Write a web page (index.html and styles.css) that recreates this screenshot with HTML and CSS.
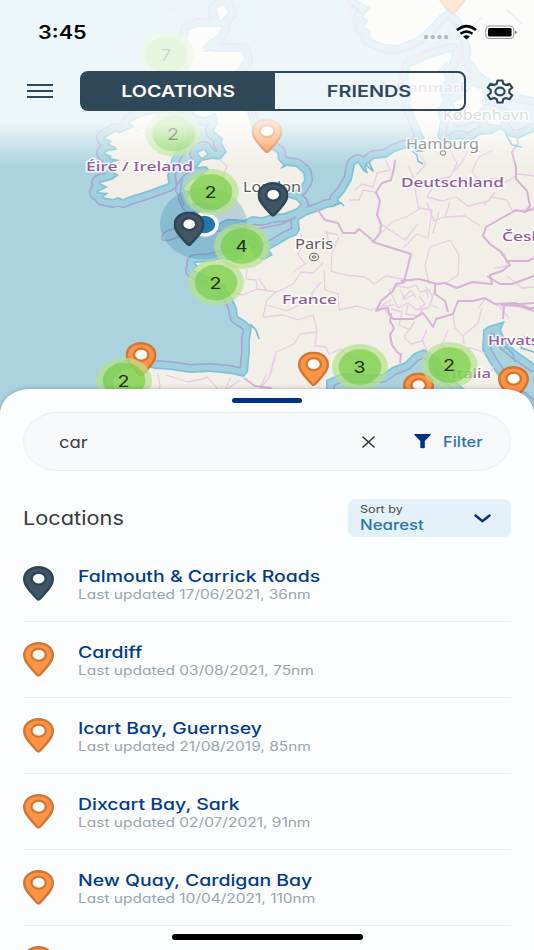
FILE: index.html
```html
<!DOCTYPE html>
<html lang="en">

<head>
    <meta charset="UTF-8">
    <meta name="viewport" content="width=device-width, initial-scale=1.0">
    <title>Locations</title>
    <link rel="stylesheet" href="styles.css">
</head>

<body>
    <div class="phone">
        <section class="top">
            <svg class="map" viewBox="0 0 534 410" width="534" height="410">
                <defs>
                    <symbol id="pin" viewBox="0 0 31 35">
                        <path d="M15.5 1.2C7.2 1.2 1.2 6.5 1.2 13.3c0 6.6 7.3 13.4 12.6 19.2q1.7 1.9 3.4 0c5.3-5.8 12.6-12.6 12.6-19.2C29.8 6.500 23.8 1.200 15.500 1.200z" stroke-width="2.400" />
                        <ellipse cx="15.700" cy="12.700" rx="7.400" ry="6.200" stroke-width="2" />
                        <ellipse cx="15.700" cy="12.700" rx="5.800" ry="4.800" fill="#fff" stroke="none" />
                    </symbol>
                    <g id="land">
                        <path d="M147 115L135 120 130 123 135 127 127 130 120 133 115 132 110 135 105 138 112 141 109 144 116 147 117 150 108 151 105 153 112 156 110 158 120 160 112 163 110 167 114 172 119 175 112 180 100 183 108 187 98 192 109 193 103 197 113 199 118 197 123 199 130 196 140 193 152 189 168 183 167 175 170 163 173 155 177 150 179 143 187 137 186 128 180 120 168 113z" />
                        <path d="M189 31L198 27 222 27 217 36 209 40 202 48 214 52 242 52 244 60 234 72 228 86 230 100 240 105 247 112 250 123 255 137 267 147 277 153 278 160 283 165 280 169 287 166 296 167 303 173 304 180 299 188 293 191 281 196 296 200 300 204 297 208 284 213 272 214 262 217 252 216 244 220 236 219 226 219 219 223 210 221 204 227 198 228 192 231 189 227 196 222 205 214 215 211 223 207 212 205 204 202 190 204 187 198 191 192 184 189 190 181 202 176 209 169 206 166 197 167 202 161 212 159 220 160 227 152 222 143 223 138 214 131 218 124 216 113 205 117 196 115 191 107 197 98 190 88 187 74 190 66 183 57 187 44z" />
                        <path d="M452 52L440 55 426 60 411 67 408 78 412 90 410 104 416 118 422 133 425 138 419 146 424 152 416 152 412 147 404 149 395 152 386 158 374 159 366 166 368 174 363 171 358 163 355 165 352 180 345 192 338 200 342 203 334 207 327 208 320 211 308 215 299 220 300 230 297 235 288 239 278 245 269 250 273 255 264 260 255 258 250 246 243 244 244 258 232 261 222 259 210 262 195 263 199 266 194 270 201 273 212 278 224 284 232 297 237 308 238 316 246 321 252 327 250 340 250 352 248 372 244 377 230 374 210 372 190 373 170 370 155 369 142 366 122 370 113 380 118 410 329 410 326 394 326 380 342 373 362 374 382 374 392 367 405 362 414 353 424 349 438 357 446 372 460 385 478 400 492 410 534 410 520 399 507 392 498 376 489 362 482 350 483 330 488 326 505 321 501 330 507 343 518 352 534 363 534 132 518 139 508 136 501 129 492 134 480 135 470 142 458 139 450 145 440 141 437 136 440 122 437 110 443 100 438 89 446 80 442 70 450 62z" />
                        <path d="M357 0L371 8 363 16 369 22 363 26 371 30 370 38 385 44 397 45 417 37 431 24 439 15 448 9 460 17 468 37 472 51 470 59 482 73 494 83 512 93 534 97 534 0z" />
                        <path d="M453 103L463 98 472 86 482 90 486 104 474 114 460 118zM490 113l14 4-5 8-12-2zM518 335l7 6 9 2v12zM217 9l7-4 4 8-8 8zM198 153l6-3 3 4-5 4z" />
                    </g>
                </defs>
                <rect width="534" height="410" fill="#abd3df" />
                <use href="#land" class="sea-border" />
                <use href="#land" class="shallow" />
                <use href="#land" class="coast" />
                <use href="#land" class="ground" />

                <g class="region">
                    <path d="M136 131l12-6 10-8 14 0M219 159l8 7-4 10 2 12-8 6M247 268l-1 11 10 1 1 9-14 6-10-2M257 289l20 3 16-8 8-12 12 1 10-10M301 233l2 12-5 9 7 10-12 8M330 245l-4-13 12 3M339 237l-7 16-1 18 14 4 20 2 9 7 12-8 16 3 10 2M324 270l1 20 13 4 1 16 18-4 14 4 13-4 10-1M267 291l-8-12M276 292l-9 8-4 17 20-2 15 5 15-5 4 15-2 16 11 1 3 7 12-5 8 7 14 4M316 332l-16 2-6 10-18 8-3 10-2 12M380 234l12-12 16-6 11-7-3-14-3-17-4-12M419 208l13 2-4 28-11-4-14 14M379 223l26 17 13-16M450 150l7 13-7 14-13 2-10 18 15 4 14-4 12 9 20-5 7-9M427 203l7 18 11-4 5-15M445 217l20-1 15 10M433 233l6-21M450 240l-20 7-5 19 4 18M450 240l9 15-1 20-12 8M355 190l7-6 11 3 4-14 13-3-4-10M349 200l10 0 4-10 11 2 6 7M374 172l-5-7M402 300l9-10 5 8M391 309l11 3-3 13 11 5 5-9M492 245l13 9 2 12-13 2M507 276l15 12 12-1M453 314l2 14 8 8 1 8M463 336l15-13 4-15M448 331l-7 15 10 4 20-2 14 5M478 309l7-10 15 8 9 11M414 322l-10 15 7 7 11-3 5-12M480 182l14-4 12 4 12-8 16 2M484 205l8-8 15 3 6 12 21-4M493 150l-14 7-7 14 7 10M468 150l-5 11-9 10M509 230l12 8 13-2M422 340l8 16M494 366l-4 7M158 374l2 12-4 14M166 375l22 7 18-4M206 376l11 12-4 14M231 377l-7 15M267 373l-7 15 15 4 13 14M240 380l-14 10M275 358l-6 20-8 9M420 155l6 9-10 11M439 144l12 7M303 303l-16 8-20-6M321 282l-9 11 1 8" />
                    <path d="M389 290l9-4 10 2 8-3 4 7 9-2 4 8-5 10-11 2-9-7-10 5-4-9zM400 290l5 9 10-5M419 296l6 8-8 6M426 286l2 12M391 300l-8 5 4 8M408 305l-2 9 12 2 7-9M434 291l-4 14 9 3" />
                </g>
                <g class="country">
                    <path d="M316 208l9 12 13 3 5 10 12 0 4-4 12 10 2 3 7-9 1-9-4-9 3-14-4-9 6-9 9-3 3-12 1-8M373 242l38 12-7 28-2 1-6 1-3 7-12 10-5 10 5-2 7-1 1 6 4 5 4 0 16 0 10-6 6 8 4 6 3-8 17-5 5-13 15 0 12-3 10 6 20-1 14 5 17 0M401 281l18-2 18 5 8-1 12 5 15-6 20 2-2-9 12-4 8-6-10-14-9-6-8-9 3-9 30-17 9 2 5-6-3-15-11-12 0-12-4-15 6-9-3-16M391 313l-1 8 4 7-4 7 2 10 6 8 3 1-1 9M507 261l21 0 6-3M501 305l18 1 15 5M534 303l-30 2-1 14M487 276l13 8 12 0 22-8M244 378l11 8 15 2 10 7 20-3 14 7 14 2M523 212l11-3M435 284v10l10 7 3 11" />
                </g>
                <g class="river">
                    <path d="M412 151l5 4 1 6 5 3M250 324l6 6 3 9M366 165l7 6-4-9M505 346l8 8 2 8M505 133l7 12 10 2M525 336l-4 12 13 4M203 51l16-1M334 205l7-2 3 3" />
                    <path d="M352 4l12 12M463 37l18-19M507 10l15 14M447 63l-9 9" />
                </g>
                <g class="faint-border">
                    <path d="M130 50q-8 6-15 1t7-9q9 0 8 8M163 14q8-8 18-3 5 5-1 8-11 2-17-5M200 9q7 5-2 12-9-3-2-12M160 28l26-5 20-3 13-14 14-6M351 0q-6 18 12 28l17 18 25 3 30-14 14-3 16 36 16 16M407 98l-7-14 5-22 26-16 22-9" />
                    <path class="border-line" d="M186 226l-8 2q-14 2-16 8t8 4l16-6M236 223l22 6 24-5 14-7M182 178l-2 16 4 12" />
                </g>

                <g class="labels country-label">
                    <text x="86" y="171" textLength="107" lengthAdjust="spacingAndGlyphs">Éire / Ireland</text>
                    <text x="401" y="187" textLength="103" lengthAdjust="spacingAndGlyphs">Deutschland</text>
                    <text x="396" y="92" textLength="73" lengthAdjust="spacingAndGlyphs" opacity=".7">Danmark</text>
                    <text x="282" y="304" textLength="55" lengthAdjust="spacingAndGlyphs">France</text>
                    <text x="502" y="241" textLength="50" lengthAdjust="spacingAndGlyphs">Česko</text>
                    <text x="488" y="345" textLength="69" lengthAdjust="spacingAndGlyphs">Hrvatska</text>
                    <text x="451" y="378" textLength="40" lengthAdjust="spacingAndGlyphs">Italia</text>
                </g>
                <g class="labels city-label">
                    <text x="243" y="192" textLength="58" lengthAdjust="spacingAndGlyphs">London</text>
                    <text x="295" y="249" textLength="38" lengthAdjust="spacingAndGlyphs">Paris</text>
                    <text x="406" y="149" textLength="73" lengthAdjust="spacingAndGlyphs">Hamburg</text>
                    <text x="443" y="120" textLength="86" lengthAdjust="spacingAndGlyphs">København</text>
                </g>
                <g fill="none" stroke="#666">
                    <ellipse cx="314" cy="257" rx="4.500" ry="3.700" />
                    <ellipse cx="314" cy="257" rx="1.800" ry="1.200" />
                    <ellipse cx="443" cy="153" rx="2.800" ry="2.200" />
                    <ellipse cx="486" cy="102" rx="4" ry="3.300" opacity=".7" />
                </g>

                <!-- current position -->
                <ellipse cx="203.500" cy="223.500" rx="43.500" ry="36" fill="#2276a9" fill-opacity=".25" />
                <ellipse cx="204.500" cy="224.500" rx="12.500" ry="10.500" fill="#2276a9" stroke="#fff" stroke-width="3.600" />

                <use href="#pin" class="orange" x="437" y="-20" width="31" height="35" />
                <use href="#pin" class="orange" x="251.500" y="118.500" width="31" height="35" />
                <use href="#pin" class="navy" x="257.500" y="182" width="31" height="35" />
                <use href="#pin" class="navy" x="173.500" y="211.500" width="31" height="35" />
                <use href="#pin" class="orange" x="125.500" y="342" width="31" height="35" />
                <use href="#pin" class="orange" x="298" y="351.500" width="31" height="35" />
                <use href="#pin" class="orange" x="403" y="372.500" width="31" height="35" />
                <use href="#pin" class="orange" x="498" y="366" width="31" height="35" />

                <g class="cluster">
                    <ellipse class="halo" cx="166.500" cy="55" rx="28" ry="23" />
                    <ellipse class="core" cx="166.500" cy="55" rx="21.300" ry="17.800" />
                    <text x="161" y="60.500" textLength="10" lengthAdjust="spacingAndGlyphs">7</text>
                    <ellipse class="halo" cx="173.500" cy="133.500" rx="28" ry="23" />
                    <ellipse class="core" cx="173.500" cy="133.500" rx="21.300" ry="17.800" />
                    <text x="167" y="139.500" textLength="12" lengthAdjust="spacingAndGlyphs">2</text>
                    <ellipse class="halo" cx="211" cy="192" rx="28" ry="23" />
                    <ellipse class="core" cx="211" cy="192" rx="21.300" ry="17.800" />
                    <text x="204.500" y="198" textLength="12" lengthAdjust="spacingAndGlyphs">2</text>
                    <ellipse class="halo" cx="242" cy="246" rx="28" ry="23" />
                    <ellipse class="core" cx="242" cy="246" rx="21.300" ry="17.800" />
                    <text x="235.500" y="252" textLength="12" lengthAdjust="spacingAndGlyphs">4</text>
                    <ellipse class="halo" cx="216" cy="282.500" rx="28" ry="23" />
                    <ellipse class="core" cx="216" cy="282.500" rx="21.300" ry="17.800" />
                    <text x="209.500" y="288.500" textLength="12" lengthAdjust="spacingAndGlyphs">2</text>
                    <ellipse class="halo" cx="124" cy="380.500" rx="28" ry="23" />
                    <ellipse class="core" cx="124" cy="380.500" rx="21.300" ry="17.800" />
                    <text x="117.500" y="386.500" textLength="12" lengthAdjust="spacingAndGlyphs">2</text>
                    <ellipse class="halo" cx="360" cy="367" rx="28" ry="23" />
                    <ellipse class="core" cx="360" cy="367" rx="21.300" ry="17.800" />
                    <text x="353.500" y="373" textLength="12" lengthAdjust="spacingAndGlyphs">3</text>
                    <ellipse class="halo" cx="449.500" cy="365" rx="28" ry="23" />
                    <ellipse class="core" cx="449.500" cy="365" rx="21.300" ry="17.800" />
                    <text x="443" y="371" textLength="12" lengthAdjust="spacingAndGlyphs">2</text>
                </g>
            </svg>

            <header class="header">
                <div class="status">
                    <span class="time">3:45</span>
                    <svg width="94" height="18" viewBox="0 0 94 18">
                        <g fill="#b3b9bd">
                            <rect x="1" y="12" width="4" height="4" rx="1.500" />
                            <rect x="7.800" y="12" width="4" height="4" rx="1.500" />
                            <rect x="14.500" y="12" width="4" height="4" rx="1.500" />
                            <rect x="21.200" y="12" width="4" height="4" rx="1.500" />
                        </g>
                        <g fill="none" stroke="#000" stroke-width="2.600">
                            <path d="M34 7q9.500-7.800 19 0" />
                            <path d="M37.500 10.800q6-4.600 12 0" />
                        </g>
                        <path d="M40.100 13.500q3.400-2.400 6.800 0l-3.400 2.900z" />
                        <rect x="62.800" y="3" width="28" height="12.500" rx="3.800" fill="#fff" stroke="#8f9599" stroke-width="1.100" />
                        <rect x="65" y="5" width="23.600" height="8.500" rx="1.500" />
                        <path d="M92 7.200q3 2 0 4z" fill="#777" />
                    </svg>
                </div>
                <nav class="nav">
                    <svg class="menu" width="26" height="16" viewBox="0 0 26 16">
                        <path d="M0 2h26M0 8h26M0 14h26" stroke="#2f4858" stroke-width="2.200" />
                    </svg>
                    <div class="tabs">
                        <div class="tab active"><span>LOCATIONS</span></div>
                        <div class="tab"><span>FRIENDS</span></div>
                    </div>
                    <svg class="gear" width="28" height="25" viewBox="0 0 28 25" fill="none" stroke="#2f4858" stroke-width="2.200" stroke-linejoin="round">
                        <path d="M11.500 1.500h5l.7 3.200 2.600 1.300 3.700-1.200 2.700 3.900-2.900 2.300v3l2.900 2.300-2.700 3.900-3.700-1.200-2.600 1.300-.7 3.200h-5l-.7-3.200-2.600-1.300-3.700 1.200-2.700-3.900 2.900-2.300v-3L1.800 8.700l2.700-3.900 3.700 1.200 2.600-1.300z" />
                        <ellipse cx="14" cy="12.500" rx="4.600" ry="3.900" />
                    </svg>
                </nav>
            </header>
        </section>

        <main class="sheet">
            <div class="handle"></div>
            <div class="search">
                <span class="query">car</span>
                <svg class="clear" width="13" height="12" viewBox="0 0 13 12">
                    <path d="M1 1l11 10M12 1L1 11" stroke="#333" stroke-width="1.600" stroke-linecap="round" />
                </svg>
                <svg class="funnel" width="17" height="15" viewBox="0 0 17 15">
                    <path d="M.8 0h15.400q1 0 .4 1L10.800 7v7q-2 .8-4.500-.2V7L.4 1Q-.2 0 .8 0z" fill="#003087" />
                </svg>
                <span class="filter">Filter</span>
            </div>

            <div class="list-head">
                <h1>Locations</h1>
                <div class="sort">
                    <div class="sort-text">
                        <span class="sort-label">Sort by</span>
                        <span class="sort-value">Nearest</span>
                    </div>
                    <svg width="17" height="9" viewBox="0 0 17 9">
                        <path d="M1.500 1.500l7 5.700 7-5.700" fill="none" stroke="#003087" stroke-width="2.400" stroke-linecap="round" />
                    </svg>
                </div>
            </div>

            <ul class="list">
                <li>
                    <svg class="navy" width="31" height="35"><use href="#pin" /></svg>
                    <div class="info">
                        <h2>Falmouth &amp; Carrick Roads</h2>
                        <p>Last updated 17/06/2021, 36nm</p>
                    </div>
                </li>
                <li>
                    <svg class="orange" width="31" height="35"><use href="#pin" /></svg>
                    <div class="info">
                        <h2>Cardiff</h2>
                        <p>Last updated 03/08/2021, 75nm</p>
                    </div>
                </li>
                <li>
                    <svg class="orange" width="31" height="35"><use href="#pin" /></svg>
                    <div class="info">
                        <h2>Icart Bay, Guernsey</h2>
                        <p>Last updated 21/08/2019, 85nm</p>
                    </div>
                </li>
                <li>
                    <svg class="orange" width="31" height="35"><use href="#pin" /></svg>
                    <div class="info">
                        <h2>Dixcart Bay, Sark</h2>
                        <p>Last updated 02/07/2021, 91nm</p>
                    </div>
                </li>
                <li>
                    <svg class="orange" width="31" height="35"><use href="#pin" /></svg>
                    <div class="info">
                        <h2>New Quay, Cardigan Bay</h2>
                        <p>Last updated 10/04/2021, 110nm</p>
                    </div>
                </li>
                <li>
                    <svg class="orange" width="31" height="35"><use href="#pin" /></svg>
                </li>
            </ul>
        </main>
        <div class="home-bar"></div>
    </div>
</body>

</html>
```
FILE: styles.css
```css
* {
    margin: 0;
    padding: 0;
    box-sizing: border-box;
}

body {
    font-family: Inter, "Noto Sans", sans-serif;
    font-feature-settings: "cv11";
    color: #3a3a3a;
}

.phone {
    position: relative;
    width: 534px;
    height: 950px;
    overflow: hidden;
    background: #fcfdff;
}

/* wide letterforms */
.time,
.tab span,
.query,
.filter,
.sort-label,
.sort-value,
.list-head h1,
.info h2,
.info p {
    display: block;
    width: max-content;
    white-space: nowrap;
    transform: scaleX(1.2);
    transform-origin: left center;
}

/* map */
.top {
    position: relative;
    height: 389px;
}

.map {
    position: absolute;
    top: 0;
    left: 0;
}

.sea-border {
    fill: none;
    stroke: #a3a3cf;
    stroke-width: 18px;
    stroke-linejoin: round;
}

.shallow {
    fill: none;
    stroke: #a0cfde;
    stroke-width: 15px;
    stroke-linejoin: round;
}

.coast {
    fill: none;
    stroke: #80c2d8;
    stroke-width: 3.5px;
    stroke-linejoin: round;
}

.ground {
    fill: #f2efe9;
}

.region,
.country,
.river,
.faint-border {
    fill: none;
    stroke-linejoin: round;
}

.region {
    stroke: #e6cde3;
    stroke-width: 1.3px;
}

.country {
    stroke: #d9b2d8;
    stroke-width: 2px;
}

.river {
    stroke: #78bad2;
    stroke-width: 1.6px;
}

.faint-border {
    stroke: #cfb5d6;
    stroke-width: 1.5px;
}

.border-line {
    stroke: #a3a3cf;
}

.labels {
    font-family: "Noto Sans", sans-serif;
    font-size: 13px;
    paint-order: stroke;
    stroke: rgba(255, 255, 255, .75);
    stroke-width: 3px;
    stroke-linejoin: round;
}

.country-label {
    fill: #955a99;
    font-weight: 500;
}

.city-label {
    fill: #5c5c5c;
    font-size: 14px;
}

.orange {
    fill: #ff9447;
    stroke: #cf7735;
}

.navy {
    fill: #405666;
    stroke: #2d4656;
}

.halo {
    fill: #b5e28c;
    fill-opacity: .7;
}

.core {
    fill: #6ecc39;
    fill-opacity: .6;
}

.cluster text {
    fill: #1e2e17;
    font-size: 16.5px;
}

/* header */
.header {
    position: relative;
    height: 166px;
    padding: 23px 18px 0 38px;
    background: linear-gradient(rgba(255, 255, 255, .79) 74%, rgba(255, 255, 255, 0));
}

.status {
    display: flex;
    justify-content: space-between;
    height: 48px;
}

.status svg {
    margin-right: -1px;
}

.time {
    font-size: 18px;
    line-height: 19px;
    font-weight: 600;
    color: #000;
}

.nav {
    display: flex;
    align-items: center;
    margin-left: -11px;
}

.tabs {
    display: flex;
    width: 386px;
    height: 40px;
    margin: 0 20px 0 27px;
    border: 2.5px solid #2f4858;
    border-radius: 8px;
}

.tab {
    flex: 1;
    display: flex;
    align-items: center;
    justify-content: center;
}

.tab span {
    font-size: 16px;
    font-weight: 600;
    color: #2f4858;
    transform-origin: center;
}

.tab.active {
    flex: 0 0 193px;
    background: #2f4858;
}

.tab.active span {
    color: #fff;
    transform: scaleX(1.235);
}

.tab:last-child span {
    transform: scaleX(1.24);
}

/* bottom sheet */
.sheet {
    position: relative;
    height: 561px;
    padding: 9px 23px 0;
    background: #fcfdff;
    border-radius: 29px 29px 0 0 / 25px 25px 0 0;
    box-shadow: 0 0 5px rgba(0, 0, 0, .25);
}

.handle {
    width: 70px;
    height: 5px;
    margin: 0 auto;
    border-radius: 3px;
    background: #003087;
}

.search {
    display: flex;
    align-items: center;
    height: 59px;
    margin-top: 9px;
    padding: 0 26px 0 35px;
    border: 1px solid #ecedef;
    border-radius: 35px / 30px;
    background: #f7f8fa;
}

.query {
    font-size: 16.5px;
    color: #3b3b3b;
    transform: scaleX(1.12);
}

.clear {
    margin-left: auto;
}

.funnel {
    margin: 0 12px 0 39px;
}

.search .filter {
    width: 41px;
    font-size: 14.5px;
    font-weight: 500;
    color: #2a76a6;
    transform: scaleX(1.13);
}

.list-head {
    display: flex;
    align-items: center;
    justify-content: space-between;
    height: 38px;
    margin-top: 28px;
}

.list-head h1 {
    font-size: 19px;
    font-weight: 400;
    transform: scaleX(1.145);
}

.sort {
    display: flex;
    align-items: center;
    justify-content: space-between;
    width: 163px;
    height: 38px;
    padding: 0 20px 0 12px;
    border-radius: 7px;
    background: #e4f1f9;
}

.sort-label {
    font-size: 10.5px;
    line-height: 13px;
    color: #4a4a4a;
}

.sort-value {
    font-size: 14px;
    line-height: 17px;
    font-weight: 500;
    color: #2a76a6;
}

.list {
    margin-top: 9px;
    list-style: none;
}

.list li {
    display: flex;
    align-items: flex-start;
    gap: 24px;
    height: 76px;
    padding-top: 20px;
    border-bottom: 1px solid #eceef6;
}

.info h2 {
    font-size: 16px;
    line-height: 20px;
    font-weight: 500;
    color: #003b8b;
    transform: scaleX(1.215);
}

.info p {
    font-size: 12.5px;
    line-height: 18px;
    color: #99a5ae;
    transform: scaleX(1.24);
}

.home-bar {
    position: absolute;
    left: 172px;
    bottom: 10px;
    width: 191px;
    height: 6px;
    border-radius: 3px;
    background: #000;
}
```
